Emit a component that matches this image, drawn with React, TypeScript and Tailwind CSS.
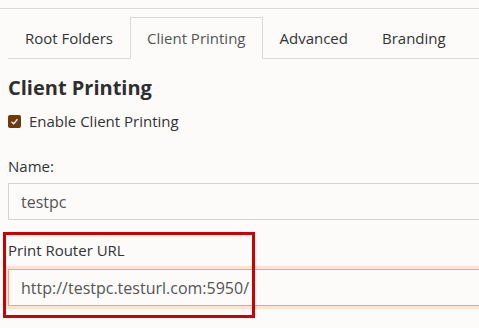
export default function App() {
  const tabs = ["Root Folders", "Client Printing", "Advanced", "Branding"];
  const active = "Client Printing";

  return (
    <div
      className="w-[479px] h-[328px] overflow-hidden bg-[#fcfbfa] text-[#333]"
      style={{ fontFamily: '"Open Sans", "Noto Sans", sans-serif' }}
    >
      <div className="w-[640px] pt-2">
        <div className="border-t border-[#d9d9d9]" />

        {/* Tabs */}
        <ul className="ml-2 mt-2 flex border-b border-[#d9d9d9]">
          {tabs.map((t) => (
            <li key={t} className="-mb-px">
              <span
                className={
                  t === active
                    ? "block h-[42px] px-4 pt-[10px] text-[15px] leading-[20px] text-[#555] border border-[#d9d9d9] border-b-[#fcfbfa] bg-[#fcfbfa]"
                    : "block h-[42px] px-4 pt-[10px] text-[15px] leading-[20px] text-[#333] border border-transparent"
                }
              >
                {t}
              </span>
            </li>
          ))}
        </ul>

        <div className="px-2">
          <h3 className="mt-[16px] text-[20px] leading-[26px] font-bold text-[#2e2e2e]">
            Client Printing
          </h3>

          <label className="mt-[10px] flex items-center gap-2 text-[15px] leading-[20px]">
            <span className="flex h-[13px] w-[13px] items-center justify-center rounded-[2px] bg-[#6e3a0c]">
              <svg viewBox="0 0 12 12" className="h-[9px] w-[9px]">
                <path d="M2 6.5 L5 9 L10 3" fill="none" stroke="#f4efe9" strokeWidth="1.8" />
              </svg>
            </span>
            Enable Client Printing
          </label>

          <div className="mt-[25px]">
            <div className="text-[15px] leading-[20px]">Name:</div>
            <div className="mt-[7px] h-[37px] border border-[#d4d4d4] px-3 flex items-center text-[16px] text-[#555]">
              testpc
            </div>
          </div>

          <div className="relative mt-[20px]">
            <div className="pointer-events-none absolute -left-[5px] top-[-8px] h-[86px] w-[252px] border-[3px] border-[#cc0000]" />
            <div className="text-[15px] leading-[20px]">Print Router URL</div>
            <div className="mt-[9px] h-[37px] border border-[#ff9f80] shadow-[0_0_0_3px_#ffe1d6] px-3 flex items-center text-[16px] text-[#555]">
              http://testpc.testurl.com:5950/
            </div>
          </div>
        </div>
      </div>
    </div>
  );
}
